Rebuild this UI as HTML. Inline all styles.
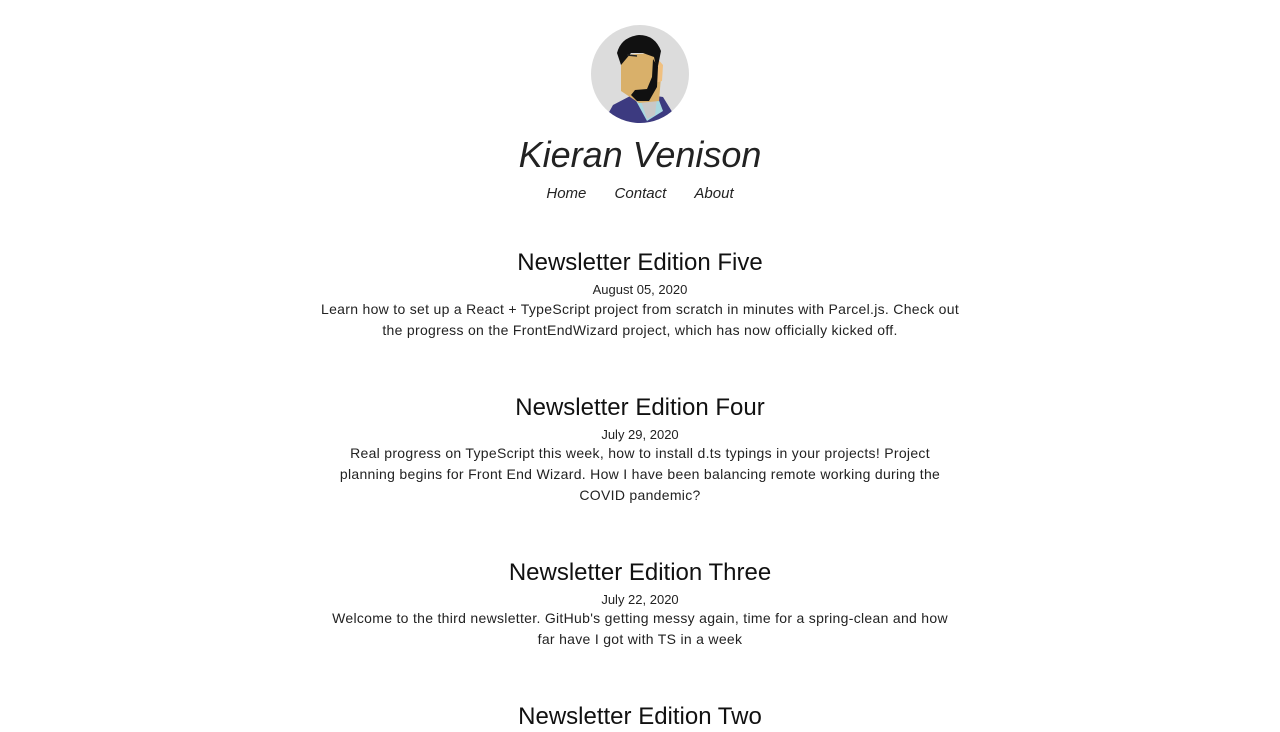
<!DOCTYPE html>
<html><head><meta charset="utf-8"><style>
body{margin:0;background:#fff;font-family:"Liberation Sans",sans-serif;color:#111;width:1280px;height:732px;overflow:hidden;position:relative}
.c{position:absolute;left:0;width:1280px;text-align:center}
h1{position:absolute;left:0;width:1280px;text-align:center;margin:0;font-weight:300;font-style:italic;font-size:36px;top:134px;color:#222}
.nav{top:185px;font-style:italic;font-size:15px;color:#222}
.nav span{margin:0 12px}
.h{font-size:24px;margin:0}
.d{font-size:13px;color:#222}
.p{font-size:14px;letter-spacing:.3px;line-height:21px;white-space:nowrap;color:#222}
</style></head><body>
<svg style="position:absolute;left:591px;top:25px" width="98" height="98" viewBox="0 0 98 98">
<defs><clipPath id="cc"><circle cx="49" cy="49" r="49"/></clipPath></defs>
<circle cx="49" cy="49" r="49" fill="#dcdcdc"/>
<g clip-path="url(#cc)">
<path d="M12 98 L22 80 L45 68 L72 72 L88 98 Z" fill="#3c3a80"/>
<path d="M44 74 L66 70 L72 86 L56 96 Z" fill="#a8d8e0"/>
<path d="M50 76 L66 74 L64 90 L56 94 Z" fill="#c8c8c8"/>
<path d="M30 30 L64 28 L70 52 L68 76 L48 78 L30 66 Z" fill="#d9b06a"/>
<path d="M65 32 L72 40 L71 56 L64 58 Z" fill="#f0c080"/>
<path d="M26 28 Q30 12 48 10 Q64 10 70 26 L66 46 L63 32 L52 28 L40 28 L30 40 Z" fill="#111"/>
<path d="M62 34 L67 42 L66 62 L58 76 L46 76 L40 70 L44 65 L56 64 L61 52 Z" fill="#111"/>
<path d="M36 30 L46 31" stroke="#222" stroke-width="1.5"/>
</g></svg>
<h1>Kieran Venison</h1>
<div class="c nav"><span>Home</span> <span>Contact</span> <span>About</span></div>

<div class="c h" style="top:249px">Newsletter Edition Five</div>
<div class="c d" style="top:282px">August 05, 2020</div>
<div class="c p" style="top:299px">Learn how to set up a React + TypeScript project from scratch in minutes with Parcel.js. Check out<br>the progress on the FrontEndWizard project, which has now officially kicked off.</div>

<div class="c h" style="top:394px">Newsletter Edition Four</div>
<div class="c d" style="top:427px">July 29, 2020</div>
<div class="c p" style="top:443px">Real progress on TypeScript this week, how to install d.ts typings in your projects! Project<br>planning begins for Front End Wizard. How I have been balancing remote working during the<br>COVID pandemic?</div>

<div class="c h" style="top:559px">Newsletter Edition Three</div>
<div class="c d" style="top:592px">July 22, 2020</div>
<div class="c p" style="top:608px">Welcome to the third newsletter. GitHub's getting messy again, time for a spring-clean and how<br>far have I got with TS in a week</div>

<div class="c h" style="top:703px">Newsletter Edition Two</div>
</body></html>
